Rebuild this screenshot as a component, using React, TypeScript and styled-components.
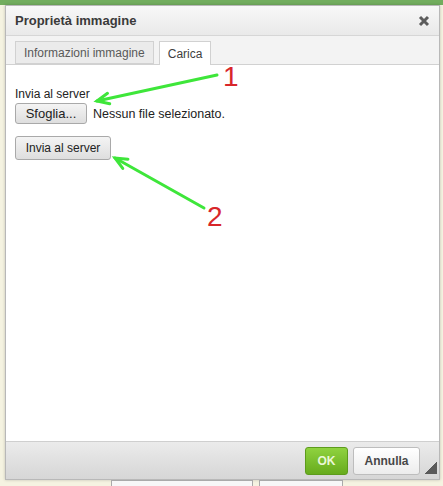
import React from "react";
import styled, { createGlobalStyle } from "styled-components";

const GlobalStyle = createGlobalStyle`
  html, body {
    margin: 0;
    padding: 0;
    background: #f5f3e1;
    font-family: "Liberation Sans", Arial, sans-serif;
  }
`;

const S = {
  Page: styled.div`
    position: relative;
    width: 443px;
    height: 486px;
    overflow: hidden;
    box-sizing: border-box;
    padding: 5px 0 0 5px;
    display: flex;
    flex-direction: column;
    background: linear-gradient(#72ad5e 0 5px, #f5f3e1 5px);
  `,
  Dialog: styled.div`
    width: 435px;
    height: 475px;
    box-sizing: border-box;
    display: flex;
    flex-direction: column;
    border: 1px solid #b8b8b8;
    box-shadow: 0 0 3px rgba(0, 0, 0, 0.2);
    background: #ffffff;
    flex-shrink: 0;
  `,
  TitleBar: styled.div`
    height: 30px;
    box-sizing: border-box;
    padding: 0 9px 0 9px;
    display: flex;
    align-items: center;
    justify-content: space-between;
    background: linear-gradient(#f8f8f8, #e9e9e9);
    border-bottom: 1px solid #d6d6d6;
  `,
  Title: styled.span`
    font-size: 13px;
    font-weight: bold;
    color: #3a3a3a;
  `,
  Close: styled.span`
    display: flex;
    width: 12px;
    height: 12px;
  `,
  TabBar: styled.div`
    height: 29px;
    box-sizing: border-box;
    padding: 5px 0 0 9px;
    display: flex;
    align-items: flex-end;
    gap: 5px;
    background: #f3f3f3;
    border-bottom: 1px solid #d1d1d1;
  `,
  Tab: styled.div<{ active?: boolean }>`
    height: ${({ active }) => (active ? "24px" : "23px")};
    margin-bottom: ${({ active }) => (active ? "-1px" : "0")};
    box-sizing: border-box;
    padding: 0 8px;
    display: flex;
    align-items: center;
    font-size: 12px;
    color: ${({ active }) => (active ? "#404040" : "#595959")};
    background: ${({ active }) => (active ? "#ffffff" : "#ebebeb")};
    border: 1px solid #d1d1d1;
    border-bottom: ${({ active }) => (active ? "none" : "1px solid #d1d1d1")};
  `,
  Content: styled.div`
    flex: 1;
    box-sizing: border-box;
    padding: 22px 9px;
    display: flex;
    flex-direction: column;
    align-items: flex-start;
    background: #ffffff;
  `,
  Label: styled.div`
    font-size: 12px;
    line-height: 14px;
    color: #222;
    margin-bottom: 2px;
  `,
  FileRow: styled.div`
    display: flex;
    align-items: center;
    gap: 6px;
    font-size: 12.5px;
    color: #222;
  `,
  GreyButton: styled.div<{ h: number; w: number }>`
    width: ${({ w }) => w}px;
    height: ${({ h }) => h}px;
    box-sizing: border-box;
    display: flex;
    align-items: center;
    justify-content: center;
    font-size: ${({ h }) => (h > 22 ? 12 : 13)}px;
    color: #222;
    border: 1px solid #a9a9a9;
    border-radius: 3px;
    background: linear-gradient(#f4f4f4, #dedede);
  `,
  SubmitWrap: styled.div`
    margin-top: 12px;
  `,
  Footer: styled.div`
    height: 38px;
    box-sizing: border-box;
    padding: 0 2px 0 0;
    display: flex;
    align-items: center;
    justify-content: flex-end;
    gap: 5px;
    background: linear-gradient(#ebebeb, #d6d6d6);
    border-top: 1px solid #cfcfcf;
  `,
  OkButton: styled.div`
    width: 43px;
    height: 28px;
    box-sizing: border-box;
    display: flex;
    align-items: center;
    justify-content: center;
    font-size: 12px;
    font-weight: bold;
    color: #eaf7d7;
    border: 1px solid #5d9b1c;
    border-radius: 3px;
    background: linear-gradient(#8fd23f, #67ab1d);
  `,
  CancelButton: styled.div`
    width: 67px;
    height: 28px;
    box-sizing: border-box;
    display: flex;
    align-items: center;
    justify-content: center;
    font-size: 12px;
    font-weight: bold;
    color: #474747;
    border: 1px solid #bdbdbd;
    border-radius: 3px;
    background: linear-gradient(#ffffff, #ececec);
  `,
  Resize: styled.div`
    width: 12px;
    height: 12px;
    margin-top: 14px;
    background: linear-gradient(135deg, transparent 50%, #5a5a5a 50%);
  `,
  PageButtons: styled.div`
    display: flex;
    gap: 6px;
    padding-left: 106px;
    margin-top: 0;
  `,
  PageButton: styled.div<{ w: number }>`
    width: ${({ w }) => w}px;
    height: 22px;
    box-sizing: border-box;
    border: 1px solid #aaa;
    background: #f7f7f7;
    display: flex;
    justify-content: center;
    font-size: 13px;
    line-height: 20px;
    color: #555;
  `,
  Notes: styled.svg`
    position: absolute;
    left: 0;
    top: 0;
    pointer-events: none;
  `,
};

const Arrow = ({ x1, y1, x2, y2 }: { x1: number; y1: number; x2: number; y2: number }) => {
  const a = Math.atan2(y1 - y2, x1 - x2);
  const len = 13;
  const spread = 0.42;
  const p1 = [x2 + len * Math.cos(a + spread), y2 + len * Math.sin(a + spread)];
  const p2 = [x2 + len * Math.cos(a - spread), y2 + len * Math.sin(a - spread)];
  return (
    <g stroke="#3ee63a" strokeWidth={3} strokeLinecap="round" fill="none">
      <line x1={x1} y1={y1} x2={x2} y2={y2} />
      <polyline points={`${p1[0]},${p1[1]} ${x2},${y2} ${p2[0]},${p2[1]}`} strokeLinejoin="miter" />
    </g>
  );
};

const App: React.FC = () => {
  return (
    <>
      <GlobalStyle />
      <S.Page>
        <S.Dialog>
          <S.TitleBar>
            <S.Title>Proprietà immagine</S.Title>
            <S.Close>
              <svg width="12" height="12" viewBox="0 0 12 12">
                <path d="M2 2 L10 10 M10 2 L2 10" stroke="#5c5c5c" strokeWidth="3" />
              </svg>
            </S.Close>
          </S.TitleBar>
          <S.TabBar>
            <S.Tab>Informazioni immagine</S.Tab>
            <S.Tab active>Carica</S.Tab>
          </S.TabBar>
          <S.Content>
            <S.Label>Invia al server</S.Label>
            <S.FileRow>
              <S.GreyButton w={72} h={21}>Sfoglia...</S.GreyButton>
              <span>Nessun file selezionato.</span>
            </S.FileRow>
            <S.SubmitWrap>
              <S.GreyButton w={96} h={24}>Invia al server</S.GreyButton>
            </S.SubmitWrap>
          </S.Content>
          <S.Footer>
            <S.OkButton>OK</S.OkButton>
            <S.CancelButton>Annulla</S.CancelButton>
            <S.Resize />
          </S.Footer>
        </S.Dialog>
        <S.PageButtons>
          <S.PageButton w={142}>Inserisci la risposta</S.PageButton>
          <S.PageButton w={84}>Anteprima</S.PageButton>
        </S.PageButtons>
        <S.Notes width="443" height="486" viewBox="0 0 443 486">
          <Arrow x1={217} y1={75} x2={97} y2={101} />
          <Arrow x1={204} y1={208} x2={115} y2={158} />
          <text x="223" y="86" fontSize="28" fill="#d8262a" fontFamily="Liberation Sans, Arial, sans-serif">1</text>
          <text x="207" y="226" fontSize="28" fill="#d8262a" fontFamily="Liberation Sans, Arial, sans-serif">2</text>
        </S.Notes>
      </S.Page>
    </>
  );
};

export default App;
